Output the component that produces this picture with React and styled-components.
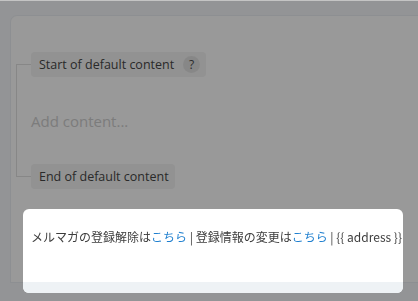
import React from "react";
import styled, { createGlobalStyle } from "styled-components";

const GlobalStyle = createGlobalStyle`
  html, body {
    margin: 0;
    padding: 0;
    background: #c4c4c4;
    font-family: "Open Sans", "Noto Sans CJK JP", sans-serif;
  }
`;

const Page = styled.div`
  width: 418px;
  height: 301px;
  overflow: hidden;
  display: grid;
  grid-template-columns: 11px 1fr;
  grid-template-rows: 1px 15px 1fr;
  background: #f5f7fa;
`;

const TopEdge = styled.div`
  grid-column: 1 / 3;
  background: #c4c4c4;
`;

const TopBar = styled.div`
  grid-column: 1 / 3;
  background: #f5f7fa;
`;

const Side = styled.div`
  background: #f5f7fa;
`;

const Panel = styled.div`
  height: 266px;
  background: #fff;
  border-top-left-radius: 6px;
  box-shadow: 0 0 0 1px #eceff3;
  padding-top: 36px;
  display: flex;
  flex-direction: column;
  box-sizing: border-box;
`;

const Tree = styled.div`
  position: relative;
  margin-left: 5px;
  display: flex;
  flex-direction: column;

  &::before {
    content: "";
    position: absolute;
    left: 0;
    top: 13px;
    bottom: 12px;
    width: 1px;
    background: #e2e2e2;
  }
`;

const Branch = styled.div`
  display: flex;
  align-items: center;
  margin-top: ${({ $gap }) => $gap || 0}px;
`;

const Connector = styled.div`
  width: 15px;
  height: 1px;
  background: #e2e2e2;
`;

const Chip = styled.div`
  display: flex;
  align-items: center;
  gap: 9px;
  height: ${({ $h }) => $h}px;
  padding: 0 6px 0 8px;
  border-radius: 4px;
  background: #f3f3f3;
  color: #474747;
  font-size: 12.5px;
  box-sizing: border-box;
`;

const Help = styled.span`
  width: 17px;
  height: 17px;
  border-radius: 50%;
  background: #e2e2e2;
  display: flex;
  align-items: center;
  justify-content: center;
  font-size: 12px;
  color: #4a4a4a;
`;

const Placeholder = styled.div`
  margin: 33px 0 0 15px;
  height: 22px;
  line-height: 22px;
  font-size: 15px;
  color: #cfcfcf;
`;

const Overlay = styled.div`
  position: fixed;
  left: 0;
  right: 0;
  top: 1px;
  bottom: 0;
  background: rgba(0, 0, 0, 0.4);
  z-index: 1;
`;

const Card = styled.div`
  position: relative;
  z-index: 2;
  margin: 20px 0 0 12px;
  width: 380px;
  height: 84px;
  background: #fff;
  border-radius: 6px;
  overflow: hidden;
  display: flex;
  flex-direction: column;
  flex-shrink: 0;
`;

const Footer = styled.div`
  flex: 1;
  padding: 19px 8px 0;
  line-height: 18px;
  font-family: "Noto Sans CJK JP", sans-serif;
  font-size: 12px;
  color: #3d3d3d;
  white-space: nowrap;
`;

const Strip = styled.div`
  height: 11px;
  background: #eef2f5;
`;

const Link = styled.a`
  color: #1e7fcf;
  text-decoration: none;
`;

export default function App() {
  return (
    <>
      <GlobalStyle />
      <Page>
        <TopEdge />
        <TopBar />
        <Side />
        <Panel>
          <Tree>
            <Branch>
              <Connector />
              <Chip $h={25}>
                Start of default content
                <Help>?</Help>
              </Chip>
            </Branch>
            <Placeholder>Add content...</Placeholder>
            <Branch $gap={32}>
              <Connector />
              <Chip $h={25}>End of default content</Chip>
            </Branch>
          </Tree>
          <Card>
            <Footer>
              メルマガの登録解除は<Link>こちら</Link> | 登録情報の変更は<Link>こちら</Link> | {"{{ address }}"}
            </Footer>
            <Strip />
          </Card>
        </Panel>
      </Page>
      <Overlay />
    </>
  );
}
